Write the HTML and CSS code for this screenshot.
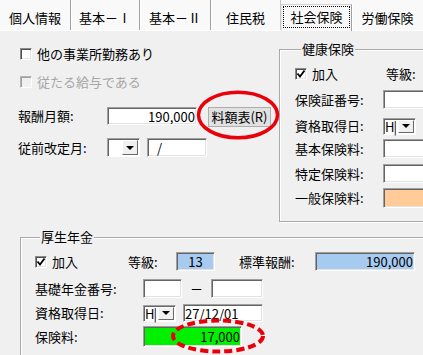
FILE: index.html
```html
<!DOCTYPE html>
<html lang="ja">
<head>
    <meta charset="UTF-8">
    <title>社会保険</title>
    <link rel="stylesheet" href="styles.css">
</head>
<body>

<div class="window">
    <div class="tabs">
        <div class="tab t1">個人情報</div>
        <div class="tab t2">基本－Ⅰ</div>
        <div class="tab t3">基本－Ⅱ</div>
        <div class="tab t4">住民税</div>
        <div class="tab t5 active"><div class="focus">社会保険</div></div>
        <div class="tab t6">労働保険</div>
    </div>

    <div class="upper">
        <div class="left">
            <div class="check row-a"><span class="box"></span>他の事業所勤務あり</div>
            <div class="check row-b disabled"><span class="box"></span>従たる給与である</div>
            <div class="row row-c">
                <span class="lbl lw89">報酬月額:</span>
                <input class="tb num w90" value="190,000">
                <button class="btn">料額表(R)</button>
            </div>
            <div class="row row-d">
                <span class="lbl lw89">従前改定月:</span>
                <div class="combo"><span class="val"></span><span class="drop"><i></i></span></div>
                <input class="tb slash w60" value="/">
            </div>
        </div>

        <fieldset class="group kenko">
            <legend>健康保険</legend>
            <div class="row k1">
                <span class="check cw91"><span class="box"><svg width="10" height="10" viewBox="0 0 10 10"><polyline points="1.5,4.5 4,7.5 8.5,1.5" /></svg></span>加入</span>
                <span class="lbl">等級:</span>
            </div>
            <div class="row k2">
                <span class="lbl lw88">保険証番号:</span>
                <input class="tb w60" value="">
            </div>
            <div class="row k3">
                <span class="lbl lw88">資格取得日:</span>
                <div class="combo small"><span class="val">H|</span><span class="drop"><i></i></span></div>
            </div>
            <div class="row k4">
                <span class="lbl lw88">基本保険料:</span>
                <input class="tb w60" value="">
            </div>
            <div class="row k5">
                <span class="lbl lw88">特定保険料:</span>
                <input class="tb w60" value="">
            </div>
            <div class="row k6">
                <span class="lbl lw88">一般保険料:</span>
                <input class="tb w60 orange" value="">
            </div>
        </fieldset>
    </div>

    <fieldset class="group kosei">
        <legend>厚生年金</legend>
        <div class="row p1">
            <span class="check cw93"><span class="box"><svg width="10" height="10" viewBox="0 0 10 10"><polyline points="1.5,4.5 4,7.5 8.5,1.5" /></svg></span>加入</span>
            <span class="lbl lw48">等級:</span>
            <input class="tb blue w39 center" value="13">
            <span class="lbl lw76 ml24">標準報酬:</span>
            <input class="tb blue num w100" value="190,000">
        </div>
        <div class="row p2">
            <span class="lbl lw108">基礎年金番号:</span>
            <input class="tb w39" value="">
            <span class="dash">－</span>
            <input class="tb w52" value="">
        </div>
        <div class="row p3">
            <span class="lbl lw108">資格取得日:</span>
            <div class="combo small"><span class="val">H|</span><span class="drop"><i></i></span></div>
            <input class="tb date w80" value="27/12/01">
        </div>
        <div class="row p4">
            <span class="lbl lw108">保険料:</span>
            <input class="tb green num w99" value="17,000">
        </div>
    </fieldset>

    <!-- 注記の赤丸 -->
    <svg class="marks" width="423" height="355">
        <ellipse cx="238" cy="115" rx="39.5" ry="22.8" class="ring" />
        <ellipse cx="218" cy="336" rx="45" ry="15.5" class="ring dashed" />
    </svg>
</div>

</body>
</html>
```

FILE: styles.css
```css
* {
    box-sizing: border-box;
}
body {
    margin: 0;
    background: #f0f0f0;
    font-family: "Noto Sans CJK JP", sans-serif;
    font-size: 13px;
    color: #000;
}
.window {
    position: relative;
    width: 423px;
    height: 355px;
    overflow: hidden;
    background: #f0f0f0;
}

/* tabs */
.tabs {
    display: flex;
    align-items: flex-start;
    height: 31px;
    background: #f9f9f9;
    border-bottom: 1px solid #fff;
}
.tab {
    flex: none;
    height: 30px;
    padding-top: 5px;
    line-height: 25px;
    text-align: center;
    border-right: 1px solid #a0a0a0;
    box-shadow: 1px 0 0 #fff;
}
.t1 { width: 71px; }
.t2 { width: 69px; }
.t3 { width: 71px; }
.t4 { width: 70px; border-right-color: #c8c8c8; }
.t5 { width: 71px; }
.t6 { width: 72px; }
.tab.active {
    margin-top: 4px;
    height: 27px;
    padding: 0;
    background: #f9f9f9;
    border-top: 1px solid #d2d2d2;
    border-left: 1px solid #e4e4e4;
    position: relative;
    z-index: 1;
}
.focus {
    margin: 1px 0 0 1px;
    width: 67px;
    height: 22px;
    line-height: 20px;
    border: 1px dotted #000;
}

/* common controls */
.row {
    display: flex;
    align-items: center;
}
.lbl {
    flex: none;
    line-height: 18px;
    white-space: nowrap;
}
.check {
    display: flex;
    align-items: center;
    line-height: 18px;
    white-space: nowrap;
}
.box {
    flex: none;
    width: 12px;
    height: 12px;
    margin-right: 5px;
    background: #fff;
    border: 1px solid;
    border-color: #8a8a8a #fff #fff #8a8a8a;
    box-shadow: inset 1px 1px 0 #505050, inset -1px -1px 0 #e3e3e3;
    display: flex;
    align-items: center;
    justify-content: center;
}
.box svg polyline {
    fill: none;
    stroke: #000;
    stroke-width: 1.8;
}
.check.disabled {
    color: #a6a6a6;
}
.check.disabled .box {
    background: #f0f0f0;
    border-color: #b4b4b4 #fff #fff #b4b4b4;
    box-shadow: inset 1px 1px 0 #a0a0a0;
}
.tb {
    flex: none;
    height: 19px;
    margin: 0;
    padding: 0 2px;
    font: inherit;
    color: #000;
    background: #fff;
    border: 1px solid;
    border-color: #a0a0a0 #fff #fff #a0a0a0;
    box-shadow: inset 1px 1px 0 #646464, inset -1px -1px 0 #e3e3e3;
    outline: none;
}
.num {
    text-align: right;
    padding-right: 1px;
}
.center {
    text-align: center;
}
.slash {
    padding-left: 9px;
    margin-left: 7px;
}
.date {
    margin-left: 7px;
    padding-left: 1px;
}
.blue {
    background: #a6caf0;
}
.green {
    background: #00f000;
    height: 21px;
}
.orange {
    background: #ffcc99;
    height: 20px;
}
.combo {
    flex: none;
    display: flex;
    width: 33px;
    height: 19px;
    background: #fff;
    border: 1px solid;
    border-color: #a0a0a0 #fff #fff #a0a0a0;
    box-shadow: inset 1px 1px 0 #646464;
    padding: 1px;
}
.combo.small {
    height: 17px;
}
.combo .val {
    flex: 1;
    min-width: 0;
    line-height: 14px;
    letter-spacing: -1px;
    white-space: nowrap;
}
.combo .drop {
    flex: none;
    width: 16px;
    background: #f0f0f0;
    border: 1px solid;
    border-color: #fff #696969 #696969 #fff;
    display: flex;
    align-items: center;
    justify-content: center;
}
.combo .drop i {
    width: 0;
    height: 0;
    border-left: 4px solid transparent;
    border-right: 4px solid transparent;
    border-top: 4px solid #000;
}
.btn {
    flex: none;
    width: 63px;
    height: 20px;
    margin-left: 11px;
    padding: 0;
    font: inherit;
    line-height: 18px;
    background: #e1e1e1;
    border: 1px solid #adadad;
    color: #000;
}

/* widths */
.lw48 { width: 48px; }
.lw76 { width: 76px; }
.lw88 { width: 88px; }
.lw89 { width: 89px; }
.lw108 { width: 108px; }
.cw91 { width: 91px; }
.cw93 { width: 93px; }
.w39 { width: 39px; }
.w52 { width: 52px; }
.w60 { width: 60px; }
.w80 { width: 80px; }
.w90 { width: 90px; }
.w99 { width: 99px; }
.w100 { width: 100px; }
.ml24 { margin-left: 24px; }
.dash {
    flex: none;
    width: 29px;
    text-align: center;
    line-height: 18px;
}

/* upper area */
.upper {
    display: flex;
    align-items: flex-start;
}
.left {
    flex: none;
    width: 279px;
    padding: 14px 0 0 18px;
}
.row-a {
    height: 18px;
    padding-left: 2px;
}
.row-b {
    height: 18px;
    margin-top: 10px;
    padding-left: 2px;
}
.row-c {
    margin-top: 16px;
    height: 20px;
    align-items: flex-start;
}
.row-c .tb {
    height: 18px;
}
.row-d {
    margin-top: 11px;
}

/* group boxes */
.group {
    margin: 0;
    padding: 0;
    border: 1px solid #a9a9a9;
    box-shadow: inset 1px 1px 0 #fff, 1px 1px 0 #fff;
    min-width: 0;
}
.group legend {
    margin-left: 6px;
    padding: 0 1px;
    line-height: 16px;
    background: #f0f0f0;
}
.kenko {
    flex: none;
    width: 200px;
    margin-top: 10px;
    padding: 0 0 13px 15px;
}
.k1 { margin-top: 8px; height: 18px; }
.k2 { margin-top: 7px; }
.k3 { margin-top: 8px; }
.k4 { margin-top: 4px; }
.k5 { margin-top: 6px; }
.k6 { margin-top: 5px; }

.kosei {
    width: 420px;
    height: 140px;
    margin: 7px 0 0 20px;
    padding: 0 0 0 14px;
}
.kosei legend {
    margin-left: 5px;
}
.p1 { margin-top: 7px; }
.p2 { margin-top: 8px; }
.p3 { margin-top: 6px; }
.p3 .tb { height: 18px; }
.p4 { margin-top: 4px; }

/* red annotation rings */
.marks {
    position: absolute;
    top: 0;
    left: 0;
    pointer-events: none;
}
.ring {
    fill: none;
    stroke: #e8000b;
    stroke-width: 3.5;
}
.ring.dashed {
    stroke-width: 4;
    stroke-dasharray: 8 4;
}
```
